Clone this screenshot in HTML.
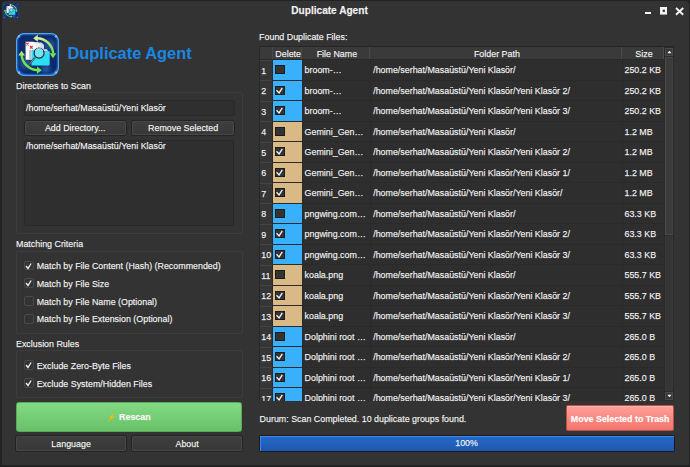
<!DOCTYPE html>
<html><head><meta charset="utf-8">
<style>
*{box-sizing:border-box;margin:0;padding:0}
html,body{width:690px;height:467px;overflow:hidden;background:#222}
body{font-family:"Liberation Sans",sans-serif;font-size:8.9px;color:#e8e8e8;position:relative}
.a{position:absolute}
.t{position:absolute;white-space:nowrap;line-height:1;color:#f2f2f2;-webkit-text-stroke:0.25px rgba(255,255,255,0.6)}
.group{border:1px solid #3c3c3c;border-radius:2px}
.input{background:#2f2f2f;border:1px solid #292929;border-radius:2px}
.btn{background:linear-gradient(#3e3e3e,#383838);border:1px solid #242424;border-radius:2.5px;box-shadow:inset 0 0 0 1px #474747}
.lcb{border:1px solid #4a4a4a;border-radius:2px;background:#333}
.ck{position:absolute}
.hd{position:absolute;background:#3a3a3a;border-right:1px solid #4a4a4a}
.vh{position:absolute;background:#363636;border-top:1px solid #444;}
.cell{position:absolute;background:#2e2e2e}
.b{background:#38b0fb}
.tn{background:#d9b985}
.tcb{position:absolute;width:9.4px;height:9.4px;background:#333;border:1px solid #1c1c1c}
.sb{position:absolute}
.dd{display:inline-block;width:0;position:relative;left:-3.95px;top:-0.6px}
</style></head><body>
<div class="a " style="left:1.5px;top:1px;width:687.5px;height:463.5px;background:#333;border-radius:4px 4px 0 0"></div>
<div class="a" style="left:3.2px;top:2.6px;width:15.7px;height:15.7px"><svg width="15.7" height="15.7" viewBox="0 0 43 43">
<defs>
<radialGradient id="bgs" cx="50%" cy="45%" r="65%"><stop offset="0" stop-color="#1a4a94"/><stop offset="0.55" stop-color="#0d2c6c"/><stop offset="0.88" stop-color="#0a2a6c"/><stop offset="1" stop-color="#1d62c4"/></radialGradient>
<radialGradient id="gls" cx="50%" cy="50%" r="50%"><stop offset="0" stop-color="#4a90e0" stop-opacity="0.45"/><stop offset="1" stop-color="#4a90e0" stop-opacity="0"/></radialGradient>
<linearGradient id="ars" x1="0" y1="0" x2="1" y2="1"><stop offset="0" stop-color="#e4ec9c"/><stop offset="1" stop-color="#74e04a"/></linearGradient>
</defs>
<rect x="0.6" y="0.6" width="41.8" height="41.8" rx="7.5" fill="url(#bgs)" stroke="#1a3060" stroke-width="2.2"/>
<rect x="1.8" y="1.8" width="39.4" height="39.4" rx="6.5" fill="none" stroke="#2a78d8" stroke-width="0.8" opacity="0.8"/>
<circle cx="9" cy="30" r="9" fill="url(#gls)"/><circle cx="34" cy="12" r="8" fill="url(#gls)"/><circle cx="30" cy="36" r="7" fill="url(#gls)"/>
<circle cx="3" cy="3.5" r="1.3" fill="#bfe2ff" opacity="0.55"/><circle cx="40" cy="3.5" r="1.3" fill="#bfe2ff" opacity="0.55"/>
<circle cx="3" cy="39.5" r="1.3" fill="#bfe2ff" opacity="0.55"/><circle cx="40" cy="39.5" r="1.3" fill="#bfe2ff" opacity="0.55"/>
<path d="M20 5.2 A16.5 16.5 0 0 1 37.2 20.5" stroke="url(#ars)" stroke-width="2.4" fill="none"/>
<path d="M17.2 5.3 L21.8 1.8 L21.8 8.8 Z" fill="#dcea98"/>
<path d="M33.6 20.2 L40.4 20.2 L37 25.3 Z" fill="#7ce04c"/>
<path d="M5.6 21.5 A16.5 16.5 0 0 0 21.5 37.2" stroke="#74e24a" stroke-width="2.4" fill="none"/>
<path d="M2.2 22.5 L5.6 17.8 L9 22.5 Z" fill="#a6e874"/>
<path d="M21 33.6 L25.8 37.2 L21 40.8 Z" fill="#74e24a"/>
<path d="M13 9.6 L25.5 9.6 L28 12 L28 24 L13 24 Z" fill="#d6dae2"/>
<path d="M11.2 9.2 L22 9.2 L24.5 11.6 L24.5 26 L11.2 26 Z" fill="#eceef2"/>
<path d="M9.6 8.8 L17.5 8.8 L19.5 10.8 L19.5 26.8 L9.6 26.8 Z" fill="#fbfbfb"/>
<rect x="13.2" y="17" width="2" height="9.6" fill="#b8bcc6"/>
<path d="M10.1 9.8 L12.7 12.4 M12.7 9.8 L10.1 12.4" stroke="#ee3030" stroke-width="1.2"/>
<path d="M14 13 L16.6 15.6 M16.6 13 L14 15.6" stroke="#ee3030" stroke-width="1.2"/>
<path d="M15.5 16.7 L26.5 16.7 L28 18.2 L33.7 18.2 L33.7 31 Q33.7 32.5 32.2 32.5 L15.5 32.5 Z" fill="#2fdcf2"/>
<path d="M27.5 16.3 L31 16.3 L32 18.2 L27.8 18.2 Z" fill="#cfeef6"/>
<path d="M15.5 19.8 L33.7 19.8" stroke="#7ae8f6" stroke-width="0.8"/>
<circle cx="23.1" cy="20.1" r="5.0" fill="#72e6f6" stroke="#1e2838" stroke-width="1.2"/>
<path d="M19.3 18 A4 4 0 0 1 26.9 18" stroke="#d8fbff" stroke-width="0.9" fill="none" opacity="0.8"/>
<path d="M19.4 23.9 L13.1 31.6" stroke="#1e2838" stroke-width="1.6"/>
<path d="M19.4 23.9 L13.1 31.6" stroke="#dfe4ec" stroke-width="0.6"/>
</svg></div>
<div class="t" style="left:291.3px;top:6.45px;font-size:10.1px;font-weight:bold;color:#f0f0f0">Duplicate Agent</div>
<div class="a " style="left:644.8px;top:11.7px;width:6.5px;height:2.6000000000000014px;background:#f2f2f2"></div>
<svg class="a" style="left:659.5px;top:7px" width="7.6" height="7.6" viewBox="0 0 7.6 7.6"><rect x="1.35" y="1.35" width="4.9" height="4.9" stroke="#f2f2f2" stroke-width="2.7" fill="none"/></svg><svg class="a" style="left:675px;top:6.5px" width="9" height="9" viewBox="0 0 9 9"><path d="M1 1 L8.2 7.8 M8.2 1 L1 7.8" stroke="#f2f2f2" stroke-width="1.9"/></svg>
<div class="a" style="left:16.4px;top:32.6px;width:43px;height:43px"><svg width="43" height="43" viewBox="0 0 43 43">
<defs>
<radialGradient id="bgl" cx="50%" cy="45%" r="65%"><stop offset="0" stop-color="#1a4a94"/><stop offset="0.55" stop-color="#0d2c6c"/><stop offset="0.88" stop-color="#0a2a6c"/><stop offset="1" stop-color="#1d62c4"/></radialGradient>
<radialGradient id="gll" cx="50%" cy="50%" r="50%"><stop offset="0" stop-color="#4a90e0" stop-opacity="0.45"/><stop offset="1" stop-color="#4a90e0" stop-opacity="0"/></radialGradient>
<linearGradient id="arl" x1="0" y1="0" x2="1" y2="1"><stop offset="0" stop-color="#e4ec9c"/><stop offset="1" stop-color="#74e04a"/></linearGradient>
</defs>
<rect x="0.6" y="0.6" width="41.8" height="41.8" rx="7.5" fill="url(#bgl)" stroke="#4aa8ff" stroke-width="1.2"/>
<rect x="1.8" y="1.8" width="39.4" height="39.4" rx="6.5" fill="none" stroke="#2a78d8" stroke-width="0.8" opacity="0.8"/>
<circle cx="9" cy="30" r="9" fill="url(#gll)"/><circle cx="34" cy="12" r="8" fill="url(#gll)"/><circle cx="30" cy="36" r="7" fill="url(#gll)"/>
<circle cx="3" cy="3.5" r="1.3" fill="#bfe2ff" opacity="0.55"/><circle cx="40" cy="3.5" r="1.3" fill="#bfe2ff" opacity="0.55"/>
<circle cx="3" cy="39.5" r="1.3" fill="#bfe2ff" opacity="0.55"/><circle cx="40" cy="39.5" r="1.3" fill="#bfe2ff" opacity="0.55"/>
<path d="M20 5.2 A16.5 16.5 0 0 1 37.2 20.5" stroke="url(#arl)" stroke-width="2.4" fill="none"/>
<path d="M17.2 5.3 L21.8 1.8 L21.8 8.8 Z" fill="#dcea98"/>
<path d="M33.6 20.2 L40.4 20.2 L37 25.3 Z" fill="#7ce04c"/>
<path d="M5.6 21.5 A16.5 16.5 0 0 0 21.5 37.2" stroke="#74e24a" stroke-width="2.4" fill="none"/>
<path d="M2.2 22.5 L5.6 17.8 L9 22.5 Z" fill="#a6e874"/>
<path d="M21 33.6 L25.8 37.2 L21 40.8 Z" fill="#74e24a"/>
<path d="M13 9.6 L25.5 9.6 L28 12 L28 24 L13 24 Z" fill="#d6dae2"/>
<path d="M11.2 9.2 L22 9.2 L24.5 11.6 L24.5 26 L11.2 26 Z" fill="#eceef2"/>
<path d="M9.6 8.8 L17.5 8.8 L19.5 10.8 L19.5 26.8 L9.6 26.8 Z" fill="#fbfbfb"/>
<rect x="13.2" y="17" width="2" height="9.6" fill="#b8bcc6"/>
<path d="M10.1 9.8 L12.7 12.4 M12.7 9.8 L10.1 12.4" stroke="#ee3030" stroke-width="1.2"/>
<path d="M14 13 L16.6 15.6 M16.6 13 L14 15.6" stroke="#ee3030" stroke-width="1.2"/>
<path d="M15.5 16.7 L26.5 16.7 L28 18.2 L33.7 18.2 L33.7 31 Q33.7 32.5 32.2 32.5 L15.5 32.5 Z" fill="#2fdcf2"/>
<path d="M27.5 16.3 L31 16.3 L32 18.2 L27.8 18.2 Z" fill="#cfeef6"/>
<path d="M15.5 19.8 L33.7 19.8" stroke="#7ae8f6" stroke-width="0.8"/>
<circle cx="23.1" cy="20.1" r="5.0" fill="#72e6f6" stroke="#1e2838" stroke-width="1.2"/>
<path d="M19.3 18 A4 4 0 0 1 26.9 18" stroke="#d8fbff" stroke-width="0.9" fill="none" opacity="0.8"/>
<path d="M19.4 23.9 L13.1 31.6" stroke="#1e2838" stroke-width="1.6"/>
<path d="M19.4 23.9 L13.1 31.6" stroke="#dfe4ec" stroke-width="0.6"/>
</svg></div>
<div class="t" style="left:67.5px;top:45.32px;font-size:16.4px;font-weight:bold;color:#1b86e4;-webkit-text-stroke:0">Duplicate Agent</div>
<div class="t" style="left:16px;top:82.07px;font-size:8.9px;">Directories to Scan</div>
<div class="a group" style="left:16px;top:92px;width:226.5px;height:141.5px;"></div>
<div class="a input" style="left:24.3px;top:100.3px;width:210.29999999999998px;height:15.5px;"></div>
<div class="t" style="left:26px;top:104.07px;font-size:8.9px;">/home/serhat/Masau<span class="dd">¨</span>stu<span class="dd">¨</span>/Yeni Klaso<span class="dd">¨</span>r</div>
<div class="a btn" style="left:23.5px;top:120.4px;width:103.3px;height:15.199999999999989px;"></div>
<div class="t" style="left:24.3px;width:101.7px;text-align:center;top:123.67px;font-size:8.9px;">Add Directory...</div>
<div class="a btn" style="left:131.3px;top:120.4px;width:103.6px;height:15.199999999999989px;"></div>
<div class="t" style="left:132px;width:102.30000000000001px;text-align:center;top:123.67px;font-size:8.9px;">Remove Selected</div>
<div class="a input" style="left:23.9px;top:139.5px;width:210.5px;height:86.80000000000001px;"></div>
<div class="t" style="left:26px;top:141.97px;font-size:8.9px;">/home/serhat/Masau<span class="dd">¨</span>stu<span class="dd">¨</span>/Yeni Klaso<span class="dd">¨</span>r</div>
<div class="t" style="left:16px;top:239.77px;font-size:8.9px;">Matching Criteria</div>
<div class="a group" style="left:16px;top:250.5px;width:226.5px;height:83.5px;"></div>
<div class="a lcb" style="left:23.9px;top:260.6px;width:9.800000000000004px;height:9.800000000000011px;"></div>
<svg class="a" style="left:23.9px;top:260.60px" width="10" height="10" viewBox="0 0 10 10"><path d="M2.1 5.0 L4.0 7.5 L7.1 2.5" stroke="#f4f4f4" stroke-width="1.3" fill="none"/></svg>
<div class="t" style="left:36.7px;top:261.87px;font-size:8.9px;">Match by File Content (Hash) (Recommended)</div>
<div class="a lcb" style="left:23.9px;top:278.3px;width:9.800000000000004px;height:9.800000000000011px;"></div>
<svg class="a" style="left:23.9px;top:278.30px" width="10" height="10" viewBox="0 0 10 10"><path d="M2.1 5.0 L4.0 7.5 L7.1 2.5" stroke="#f4f4f4" stroke-width="1.3" fill="none"/></svg>
<div class="t" style="left:36.7px;top:279.57px;font-size:8.9px;">Match by File Size</div>
<div class="a lcb" style="left:23.9px;top:296.3px;width:9.800000000000004px;height:9.800000000000011px;"></div>
<div class="t" style="left:36.7px;top:297.57px;font-size:8.9px;">Match by File Name (Optional)</div>
<div class="a lcb" style="left:23.9px;top:314.0px;width:9.800000000000004px;height:9.800000000000011px;"></div>
<div class="t" style="left:36.7px;top:315.27px;font-size:8.9px;">Match by File Extension (Optional)</div>
<div class="t" style="left:16px;top:340.17px;font-size:8.9px;">Exclusion Rules</div>
<div class="a group" style="left:16px;top:350.2px;width:226.5px;height:47.80000000000001px;"></div>
<div class="a lcb" style="left:23.9px;top:360.3px;width:9.800000000000004px;height:9.800000000000011px;"></div>
<svg class="a" style="left:23.9px;top:360.30px" width="10" height="10" viewBox="0 0 10 10"><path d="M2.1 5.0 L4.0 7.5 L7.1 2.5" stroke="#f4f4f4" stroke-width="1.3" fill="none"/></svg>
<div class="t" style="left:36.7px;top:361.57px;font-size:8.9px;">Exclude Zero-Byte Files</div>
<div class="a lcb" style="left:23.9px;top:378.3px;width:9.800000000000004px;height:9.800000000000011px;"></div>
<svg class="a" style="left:23.9px;top:378.30px" width="10" height="10" viewBox="0 0 10 10"><path d="M2.1 5.0 L4.0 7.5 L7.1 2.5" stroke="#f4f4f4" stroke-width="1.3" fill="none"/></svg>
<div class="t" style="left:36.7px;top:379.57px;font-size:8.9px;">Exclude System/Hidden Files</div>
<div class="a btn" style="left:15.9px;top:402px;width:226.5px;height:29.80000000000001px;background:linear-gradient(#82da82,#68c068);border-color:#5aa85a;box-shadow:none"></div>
<svg class="a" style="left:108.2px;top:413px" width="7" height="8.5" viewBox="0 0 7 8.5"><path d="M6.4 0 L0.9 4.9 L3.4 4.6 L0.6 8.4 L6.3 3.5 L3.9 3.8 Z" fill="#f5c01a" stroke="#f5b81a" stroke-width="0.5" stroke-linejoin="round"/></svg>
<div class="t" style="left:119.1px;top:412.87px;font-size:8.9px;font-weight:bold;color:#fafafa">Rescan</div>
<div class="a btn" style="left:15px;top:435.2px;width:112.2px;height:16.400000000000034px;"></div>
<div class="t" style="left:16px;width:110.2px;text-align:center;top:439.97px;font-size:8.9px;">Language</div>
<div class="a btn" style="left:130.8px;top:435.2px;width:112.39999999999998px;height:16.400000000000034px;"></div>
<div class="t" style="left:131.9px;width:110.4px;text-align:center;top:439.97px;font-size:8.9px;">About</div>
<div class="t" style="left:259.1px;top:32.97px;font-size:8.9px;">Found Duplicate Files:</div>
<div class="a " style="left:259px;top:46.2px;width:415px;height:354.8px;background:#2a2a2a;border:1px solid #262626"></div>
<div class="a hd" style="left:260px;top:47.1px;width:12.5px;height:11.899999999999999px;"></div>
<div class="a hd" style="left:272.5px;top:47.1px;width:29.5px;height:11.899999999999999px;"></div>
<div class="t" style="left:273.4px;width:29.5px;text-align:center;top:50.07px;font-size:8.9px;">Delete</div>
<div class="a hd" style="left:302px;top:47.1px;width:68px;height:11.899999999999999px;"></div>
<div class="t" style="left:302.9px;width:68.0px;text-align:center;top:50.07px;font-size:8.9px;">File Name</div>
<div class="a hd" style="left:370px;top:47.1px;width:252px;height:11.899999999999999px;"></div>
<div class="t" style="left:370.9px;width:252.0px;text-align:center;top:50.07px;font-size:8.9px;">Folder Path</div>
<div class="a hd" style="left:622px;top:47.1px;width:42.10000000000002px;height:11.899999999999999px;"></div>
<div class="t" style="left:622.9px;width:42.10000000000002px;text-align:center;top:50.07px;font-size:8.9px;">Size</div>
<div class="a" style="left:260px;top:59px;width:404.5px;height:342px;overflow:hidden">
<div class="vh" style="left:0;top:0.80px;width:12.300000000000011px;height:20.5px"></div><div class="cell b" style="left:13.00px;top:1.40px;width:29.20px;height:19.5px"></div><div class="cell" style="left:42.80px;top:1.40px;width:66.80px;height:19.6px"></div><div class="cell" style="left:110.60px;top:1.40px;width:251.00px;height:19.6px"></div><div class="cell" style="left:362.60px;top:1.40px;width:41.90px;height:19.6px"></div><div class="t" style="left:1.3000000000000114px;top:7.57px;font-size:8.9px;">1</div>
<div class="tcb" style="left:15.40px;top:6.00px"></div><div class="t" style="left:44.60000000000002px;top:7.07px;font-size:8.9px;">broom-…</div>
<div class="t" style="left:113.19999999999999px;top:7.07px;font-size:8.9px;">/home/serhat/Masau<span class="dd">¨</span>stu<span class="dd">¨</span>/Yeni Klaso<span class="dd">¨</span>r/</div>
<div class="t" style="left:364.5px;top:7.07px;font-size:8.9px;">250.2 KB</div>

<div class="vh" style="left:0;top:21.30px;width:12.300000000000011px;height:20.5px"></div><div class="cell b" style="left:13.00px;top:21.90px;width:29.20px;height:19.5px"></div><div class="cell" style="left:42.80px;top:21.90px;width:66.80px;height:19.6px"></div><div class="cell" style="left:110.60px;top:21.90px;width:251.00px;height:19.6px"></div><div class="cell" style="left:362.60px;top:21.90px;width:41.90px;height:19.6px"></div><div class="t" style="left:1.3000000000000114px;top:28.07px;font-size:8.9px;">2</div>
<div class="tcb" style="left:15.40px;top:26.50px"></div><svg class="ck" style="left:15.40px;top:26.50px" width="10" height="10" viewBox="0 0 10 10"><path d="M1.5 4.3 L4.1 6.9 L7.3 1.8" stroke="#f4f4f4" stroke-width="1.3" fill="none"/></svg><div class="t" style="left:44.60000000000002px;top:27.57px;font-size:8.9px;">broom-…</div>
<div class="t" style="left:113.19999999999999px;top:27.57px;font-size:8.9px;">/home/serhat/Masau<span class="dd">¨</span>stu<span class="dd">¨</span>/Yeni Klaso<span class="dd">¨</span>r/Yeni Klaso<span class="dd">¨</span>r 2/</div>
<div class="t" style="left:364.5px;top:27.57px;font-size:8.9px;">250.2 KB</div>

<div class="vh" style="left:0;top:41.80px;width:12.300000000000011px;height:20.5px"></div><div class="cell b" style="left:13.00px;top:42.40px;width:29.20px;height:19.5px"></div><div class="cell" style="left:42.80px;top:42.40px;width:66.80px;height:19.6px"></div><div class="cell" style="left:110.60px;top:42.40px;width:251.00px;height:19.6px"></div><div class="cell" style="left:362.60px;top:42.40px;width:41.90px;height:19.6px"></div><div class="t" style="left:1.3000000000000114px;top:48.57px;font-size:8.9px;">3</div>
<div class="tcb" style="left:15.40px;top:47.00px"></div><svg class="ck" style="left:15.40px;top:47.00px" width="10" height="10" viewBox="0 0 10 10"><path d="M1.5 4.3 L4.1 6.9 L7.3 1.8" stroke="#f4f4f4" stroke-width="1.3" fill="none"/></svg><div class="t" style="left:44.60000000000002px;top:48.07px;font-size:8.9px;">broom-…</div>
<div class="t" style="left:113.19999999999999px;top:48.07px;font-size:8.9px;">/home/serhat/Masau<span class="dd">¨</span>stu<span class="dd">¨</span>/Yeni Klaso<span class="dd">¨</span>r/Yeni Klaso<span class="dd">¨</span>r 3/</div>
<div class="t" style="left:364.5px;top:48.07px;font-size:8.9px;">250.2 KB</div>

<div class="vh" style="left:0;top:62.30px;width:12.300000000000011px;height:20.5px"></div><div class="cell tn" style="left:13.00px;top:62.90px;width:29.20px;height:19.5px"></div><div class="cell" style="left:42.80px;top:62.90px;width:66.80px;height:19.6px"></div><div class="cell" style="left:110.60px;top:62.90px;width:251.00px;height:19.6px"></div><div class="cell" style="left:362.60px;top:62.90px;width:41.90px;height:19.6px"></div><div class="t" style="left:1.3000000000000114px;top:69.07px;font-size:8.9px;">4</div>
<div class="tcb" style="left:15.40px;top:67.50px"></div><div class="t" style="left:44.60000000000002px;top:68.57px;font-size:8.9px;">Gemini_Gen…</div>
<div class="t" style="left:113.19999999999999px;top:68.57px;font-size:8.9px;">/home/serhat/Masau<span class="dd">¨</span>stu<span class="dd">¨</span>/Yeni Klaso<span class="dd">¨</span>r/</div>
<div class="t" style="left:364.5px;top:68.57px;font-size:8.9px;">1.2 MB</div>

<div class="vh" style="left:0;top:82.80px;width:12.300000000000011px;height:20.5px"></div><div class="cell tn" style="left:13.00px;top:83.40px;width:29.20px;height:19.5px"></div><div class="cell" style="left:42.80px;top:83.40px;width:66.80px;height:19.6px"></div><div class="cell" style="left:110.60px;top:83.40px;width:251.00px;height:19.6px"></div><div class="cell" style="left:362.60px;top:83.40px;width:41.90px;height:19.6px"></div><div class="t" style="left:1.3000000000000114px;top:89.57px;font-size:8.9px;">5</div>
<div class="tcb" style="left:15.40px;top:88.00px"></div><svg class="ck" style="left:15.40px;top:88.00px" width="10" height="10" viewBox="0 0 10 10"><path d="M1.5 4.3 L4.1 6.9 L7.3 1.8" stroke="#f4f4f4" stroke-width="1.3" fill="none"/></svg><div class="t" style="left:44.60000000000002px;top:89.07px;font-size:8.9px;">Gemini_Gen…</div>
<div class="t" style="left:113.19999999999999px;top:89.07px;font-size:8.9px;">/home/serhat/Masau<span class="dd">¨</span>stu<span class="dd">¨</span>/Yeni Klaso<span class="dd">¨</span>r/Yeni Klaso<span class="dd">¨</span>r 2/</div>
<div class="t" style="left:364.5px;top:89.07px;font-size:8.9px;">1.2 MB</div>

<div class="vh" style="left:0;top:103.30px;width:12.300000000000011px;height:20.5px"></div><div class="cell tn" style="left:13.00px;top:103.90px;width:29.20px;height:19.5px"></div><div class="cell" style="left:42.80px;top:103.90px;width:66.80px;height:19.6px"></div><div class="cell" style="left:110.60px;top:103.90px;width:251.00px;height:19.6px"></div><div class="cell" style="left:362.60px;top:103.90px;width:41.90px;height:19.6px"></div><div class="t" style="left:1.3000000000000114px;top:110.07px;font-size:8.9px;">6</div>
<div class="tcb" style="left:15.40px;top:108.50px"></div><svg class="ck" style="left:15.40px;top:108.50px" width="10" height="10" viewBox="0 0 10 10"><path d="M1.5 4.3 L4.1 6.9 L7.3 1.8" stroke="#f4f4f4" stroke-width="1.3" fill="none"/></svg><div class="t" style="left:44.60000000000002px;top:109.57px;font-size:8.9px;">Gemini_Gen…</div>
<div class="t" style="left:113.19999999999999px;top:109.57px;font-size:8.9px;">/home/serhat/Masau<span class="dd">¨</span>stu<span class="dd">¨</span>/Yeni Klaso<span class="dd">¨</span>r/Yeni Klaso<span class="dd">¨</span>r 1/</div>
<div class="t" style="left:364.5px;top:109.57px;font-size:8.9px;">1.2 MB</div>

<div class="vh" style="left:0;top:123.80px;width:12.300000000000011px;height:20.5px"></div><div class="cell tn" style="left:13.00px;top:124.40px;width:29.20px;height:19.5px"></div><div class="cell" style="left:42.80px;top:124.40px;width:66.80px;height:19.6px"></div><div class="cell" style="left:110.60px;top:124.40px;width:251.00px;height:19.6px"></div><div class="cell" style="left:362.60px;top:124.40px;width:41.90px;height:19.6px"></div><div class="t" style="left:1.3000000000000114px;top:130.57px;font-size:8.9px;">7</div>
<div class="tcb" style="left:15.40px;top:129.00px"></div><svg class="ck" style="left:15.40px;top:129.00px" width="10" height="10" viewBox="0 0 10 10"><path d="M1.5 4.3 L4.1 6.9 L7.3 1.8" stroke="#f4f4f4" stroke-width="1.3" fill="none"/></svg><div class="t" style="left:44.60000000000002px;top:130.07px;font-size:8.9px;">Gemini_Gen…</div>
<div class="t" style="left:113.19999999999999px;top:130.07px;font-size:8.9px;">/home/serhat/Masau<span class="dd">¨</span>stu<span class="dd">¨</span>/Yeni Klaso<span class="dd">¨</span>r/Yeni Klaso<span class="dd">¨</span>r/</div>
<div class="t" style="left:364.5px;top:130.07px;font-size:8.9px;">1.2 MB</div>

<div class="vh" style="left:0;top:144.30px;width:12.300000000000011px;height:20.5px"></div><div class="cell b" style="left:13.00px;top:144.90px;width:29.20px;height:19.5px"></div><div class="cell" style="left:42.80px;top:144.90px;width:66.80px;height:19.6px"></div><div class="cell" style="left:110.60px;top:144.90px;width:251.00px;height:19.6px"></div><div class="cell" style="left:362.60px;top:144.90px;width:41.90px;height:19.6px"></div><div class="t" style="left:1.3000000000000114px;top:151.07px;font-size:8.9px;">8</div>
<div class="tcb" style="left:15.40px;top:149.50px"></div><div class="t" style="left:44.60000000000002px;top:150.57px;font-size:8.9px;">pngwing.com…</div>
<div class="t" style="left:113.19999999999999px;top:150.57px;font-size:8.9px;">/home/serhat/Masau<span class="dd">¨</span>stu<span class="dd">¨</span>/Yeni Klaso<span class="dd">¨</span>r/</div>
<div class="t" style="left:364.5px;top:150.57px;font-size:8.9px;">63.3 KB</div>

<div class="vh" style="left:0;top:164.80px;width:12.300000000000011px;height:20.5px"></div><div class="cell b" style="left:13.00px;top:165.40px;width:29.20px;height:19.5px"></div><div class="cell" style="left:42.80px;top:165.40px;width:66.80px;height:19.6px"></div><div class="cell" style="left:110.60px;top:165.40px;width:251.00px;height:19.6px"></div><div class="cell" style="left:362.60px;top:165.40px;width:41.90px;height:19.6px"></div><div class="t" style="left:1.3000000000000114px;top:171.57px;font-size:8.9px;">9</div>
<div class="tcb" style="left:15.40px;top:170.00px"></div><svg class="ck" style="left:15.40px;top:170.00px" width="10" height="10" viewBox="0 0 10 10"><path d="M1.5 4.3 L4.1 6.9 L7.3 1.8" stroke="#f4f4f4" stroke-width="1.3" fill="none"/></svg><div class="t" style="left:44.60000000000002px;top:171.07px;font-size:8.9px;">pngwing.com…</div>
<div class="t" style="left:113.19999999999999px;top:171.07px;font-size:8.9px;">/home/serhat/Masau<span class="dd">¨</span>stu<span class="dd">¨</span>/Yeni Klaso<span class="dd">¨</span>r/Yeni Klaso<span class="dd">¨</span>r 2/</div>
<div class="t" style="left:364.5px;top:171.07px;font-size:8.9px;">63.3 KB</div>

<div class="vh" style="left:0;top:185.30px;width:12.300000000000011px;height:20.5px"></div><div class="cell b" style="left:13.00px;top:185.90px;width:29.20px;height:19.5px"></div><div class="cell" style="left:42.80px;top:185.90px;width:66.80px;height:19.6px"></div><div class="cell" style="left:110.60px;top:185.90px;width:251.00px;height:19.6px"></div><div class="cell" style="left:362.60px;top:185.90px;width:41.90px;height:19.6px"></div><div class="t" style="left:1.3000000000000114px;top:192.07px;font-size:8.9px;">10</div>
<div class="tcb" style="left:15.40px;top:190.50px"></div><svg class="ck" style="left:15.40px;top:190.50px" width="10" height="10" viewBox="0 0 10 10"><path d="M1.5 4.3 L4.1 6.9 L7.3 1.8" stroke="#f4f4f4" stroke-width="1.3" fill="none"/></svg><div class="t" style="left:44.60000000000002px;top:191.57px;font-size:8.9px;">pngwing.com…</div>
<div class="t" style="left:113.19999999999999px;top:191.57px;font-size:8.9px;">/home/serhat/Masau<span class="dd">¨</span>stu<span class="dd">¨</span>/Yeni Klaso<span class="dd">¨</span>r/Yeni Klaso<span class="dd">¨</span>r 3/</div>
<div class="t" style="left:364.5px;top:191.57px;font-size:8.9px;">63.3 KB</div>

<div class="vh" style="left:0;top:205.80px;width:12.300000000000011px;height:20.5px"></div><div class="cell tn" style="left:13.00px;top:206.40px;width:29.20px;height:19.5px"></div><div class="cell" style="left:42.80px;top:206.40px;width:66.80px;height:19.6px"></div><div class="cell" style="left:110.60px;top:206.40px;width:251.00px;height:19.6px"></div><div class="cell" style="left:362.60px;top:206.40px;width:41.90px;height:19.6px"></div><div class="t" style="left:1.3000000000000114px;top:212.57px;font-size:8.9px;">11</div>
<div class="tcb" style="left:15.40px;top:211.00px"></div><div class="t" style="left:44.60000000000002px;top:212.07px;font-size:8.9px;">koala.png</div>
<div class="t" style="left:113.19999999999999px;top:212.07px;font-size:8.9px;">/home/serhat/Masau<span class="dd">¨</span>stu<span class="dd">¨</span>/Yeni Klaso<span class="dd">¨</span>r/</div>
<div class="t" style="left:364.5px;top:212.07px;font-size:8.9px;">555.7 KB</div>

<div class="vh" style="left:0;top:226.30px;width:12.300000000000011px;height:20.5px"></div><div class="cell tn" style="left:13.00px;top:226.90px;width:29.20px;height:19.5px"></div><div class="cell" style="left:42.80px;top:226.90px;width:66.80px;height:19.6px"></div><div class="cell" style="left:110.60px;top:226.90px;width:251.00px;height:19.6px"></div><div class="cell" style="left:362.60px;top:226.90px;width:41.90px;height:19.6px"></div><div class="t" style="left:1.3000000000000114px;top:233.07px;font-size:8.9px;">12</div>
<div class="tcb" style="left:15.40px;top:231.50px"></div><svg class="ck" style="left:15.40px;top:231.50px" width="10" height="10" viewBox="0 0 10 10"><path d="M1.5 4.3 L4.1 6.9 L7.3 1.8" stroke="#f4f4f4" stroke-width="1.3" fill="none"/></svg><div class="t" style="left:44.60000000000002px;top:232.57px;font-size:8.9px;">koala.png</div>
<div class="t" style="left:113.19999999999999px;top:232.57px;font-size:8.9px;">/home/serhat/Masau<span class="dd">¨</span>stu<span class="dd">¨</span>/Yeni Klaso<span class="dd">¨</span>r/Yeni Klaso<span class="dd">¨</span>r 2/</div>
<div class="t" style="left:364.5px;top:232.57px;font-size:8.9px;">555.7 KB</div>

<div class="vh" style="left:0;top:246.80px;width:12.300000000000011px;height:20.5px"></div><div class="cell tn" style="left:13.00px;top:247.40px;width:29.20px;height:19.5px"></div><div class="cell" style="left:42.80px;top:247.40px;width:66.80px;height:19.6px"></div><div class="cell" style="left:110.60px;top:247.40px;width:251.00px;height:19.6px"></div><div class="cell" style="left:362.60px;top:247.40px;width:41.90px;height:19.6px"></div><div class="t" style="left:1.3000000000000114px;top:253.57px;font-size:8.9px;">13</div>
<div class="tcb" style="left:15.40px;top:252.00px"></div><svg class="ck" style="left:15.40px;top:252.00px" width="10" height="10" viewBox="0 0 10 10"><path d="M1.5 4.3 L4.1 6.9 L7.3 1.8" stroke="#f4f4f4" stroke-width="1.3" fill="none"/></svg><div class="t" style="left:44.60000000000002px;top:253.07px;font-size:8.9px;">koala.png</div>
<div class="t" style="left:113.19999999999999px;top:253.07px;font-size:8.9px;">/home/serhat/Masau<span class="dd">¨</span>stu<span class="dd">¨</span>/Yeni Klaso<span class="dd">¨</span>r/Yeni Klaso<span class="dd">¨</span>r 3/</div>
<div class="t" style="left:364.5px;top:253.07px;font-size:8.9px;">555.7 KB</div>

<div class="vh" style="left:0;top:267.30px;width:12.300000000000011px;height:20.5px"></div><div class="cell b" style="left:13.00px;top:267.90px;width:29.20px;height:19.5px"></div><div class="cell" style="left:42.80px;top:267.90px;width:66.80px;height:19.6px"></div><div class="cell" style="left:110.60px;top:267.90px;width:251.00px;height:19.6px"></div><div class="cell" style="left:362.60px;top:267.90px;width:41.90px;height:19.6px"></div><div class="t" style="left:1.3000000000000114px;top:274.07px;font-size:8.9px;">14</div>
<div class="tcb" style="left:15.40px;top:272.50px"></div><div class="t" style="left:44.60000000000002px;top:273.57px;font-size:8.9px;">Dolphini root …</div>
<div class="t" style="left:113.19999999999999px;top:273.57px;font-size:8.9px;">/home/serhat/Masau<span class="dd">¨</span>stu<span class="dd">¨</span>/Yeni Klaso<span class="dd">¨</span>r/</div>
<div class="t" style="left:364.5px;top:273.57px;font-size:8.9px;">265.0 B</div>

<div class="vh" style="left:0;top:287.80px;width:12.300000000000011px;height:20.5px"></div><div class="cell b" style="left:13.00px;top:288.40px;width:29.20px;height:19.5px"></div><div class="cell" style="left:42.80px;top:288.40px;width:66.80px;height:19.6px"></div><div class="cell" style="left:110.60px;top:288.40px;width:251.00px;height:19.6px"></div><div class="cell" style="left:362.60px;top:288.40px;width:41.90px;height:19.6px"></div><div class="t" style="left:1.3000000000000114px;top:294.57px;font-size:8.9px;">15</div>
<div class="tcb" style="left:15.40px;top:293.00px"></div><svg class="ck" style="left:15.40px;top:293.00px" width="10" height="10" viewBox="0 0 10 10"><path d="M1.5 4.3 L4.1 6.9 L7.3 1.8" stroke="#f4f4f4" stroke-width="1.3" fill="none"/></svg><div class="t" style="left:44.60000000000002px;top:294.07px;font-size:8.9px;">Dolphini root …</div>
<div class="t" style="left:113.19999999999999px;top:294.07px;font-size:8.9px;">/home/serhat/Masau<span class="dd">¨</span>stu<span class="dd">¨</span>/Yeni Klaso<span class="dd">¨</span>r/Yeni Klaso<span class="dd">¨</span>r 2/</div>
<div class="t" style="left:364.5px;top:294.07px;font-size:8.9px;">265.0 B</div>

<div class="vh" style="left:0;top:308.30px;width:12.300000000000011px;height:20.5px"></div><div class="cell b" style="left:13.00px;top:308.90px;width:29.20px;height:19.5px"></div><div class="cell" style="left:42.80px;top:308.90px;width:66.80px;height:19.6px"></div><div class="cell" style="left:110.60px;top:308.90px;width:251.00px;height:19.6px"></div><div class="cell" style="left:362.60px;top:308.90px;width:41.90px;height:19.6px"></div><div class="t" style="left:1.3000000000000114px;top:315.07px;font-size:8.9px;">16</div>
<div class="tcb" style="left:15.40px;top:313.50px"></div><svg class="ck" style="left:15.40px;top:313.50px" width="10" height="10" viewBox="0 0 10 10"><path d="M1.5 4.3 L4.1 6.9 L7.3 1.8" stroke="#f4f4f4" stroke-width="1.3" fill="none"/></svg><div class="t" style="left:44.60000000000002px;top:314.57px;font-size:8.9px;">Dolphini root …</div>
<div class="t" style="left:113.19999999999999px;top:314.57px;font-size:8.9px;">/home/serhat/Masau<span class="dd">¨</span>stu<span class="dd">¨</span>/Yeni Klaso<span class="dd">¨</span>r/Yeni Klaso<span class="dd">¨</span>r 1/</div>
<div class="t" style="left:364.5px;top:314.57px;font-size:8.9px;">265.0 B</div>

<div class="vh" style="left:0;top:328.80px;width:12.300000000000011px;height:20.5px"></div><div class="cell b" style="left:13.00px;top:329.40px;width:29.20px;height:19.5px"></div><div class="cell" style="left:42.80px;top:329.40px;width:66.80px;height:19.6px"></div><div class="cell" style="left:110.60px;top:329.40px;width:251.00px;height:19.6px"></div><div class="cell" style="left:362.60px;top:329.40px;width:41.90px;height:19.6px"></div><div class="t" style="left:1.3000000000000114px;top:335.57px;font-size:8.9px;">17</div>
<div class="tcb" style="left:15.40px;top:334.00px"></div><svg class="ck" style="left:15.40px;top:334.00px" width="10" height="10" viewBox="0 0 10 10"><path d="M1.5 4.3 L4.1 6.9 L7.3 1.8" stroke="#f4f4f4" stroke-width="1.3" fill="none"/></svg><div class="t" style="left:44.60000000000002px;top:335.07px;font-size:8.9px;">Dolphini root …</div>
<div class="t" style="left:113.19999999999999px;top:335.07px;font-size:8.9px;">/home/serhat/Masau<span class="dd">¨</span>stu<span class="dd">¨</span>/Yeni Klaso<span class="dd">¨</span>r/Yeni Klaso<span class="dd">¨</span>r 3/</div>
<div class="t" style="left:364.5px;top:335.07px;font-size:8.9px;">265.0 B</div>

</div>
<div class="a " style="left:663.6px;top:47px;width:10.799999999999955px;height:353.8px;background:#2b2b2b"></div>
<div class="a " style="left:664.6px;top:48px;width:8.899999999999977px;height:8px;background:#383838;border:1px solid #4a4a4a"></div>
<svg class="a" style="left:664.6px;top:48px" width="8.9" height="8" viewBox="0 0 8.9 8"><path d="M2.2 5.3 L4.45 2.7 L6.7 5.3 Z" fill="#eee"/></svg>
<div class="a " style="left:664.6px;top:57px;width:8.899999999999977px;height:178px;background:#3b3b3b;border:1px solid #4a4a4a;border-right-color:#404040"></div>
<div class="a " style="left:664.6px;top:236px;width:8.899999999999977px;height:155.39999999999998px;background:#353535;border:1px solid #393939"></div>
<div class="a " style="left:664.6px;top:392.2px;width:8.899999999999977px;height:8.0px;background:#383838;border:1px solid #4a4a4a"></div>
<svg class="a" style="left:664.6px;top:392.2px" width="8.9" height="8" viewBox="0 0 8.9 8"><path d="M2.2 2.7 L4.45 5.3 L6.7 2.7 Z" fill="#eee"/></svg>
<div class="t" style="left:259.6px;top:415.27px;font-size:8.9px;">Durum: Scan Completed. 10 duplicate groups found.</div>
<div class="a btn" style="left:565.8px;top:405.2px;width:108.60000000000002px;height:26.19999999999999px;background:linear-gradient(#ffa19a,#f3746b);border-color:#b4524c;border-radius:1.5px;box-shadow:inset 0 1px 0 #ffb0aa"></div>
<div class="t" style="left:566px;width:108.29999999999995px;text-align:center;top:414.77px;font-size:8.9px;font-weight:bold;color:#fff">Move Selected to Trash</div>
<div class="a " style="left:258.6px;top:435.3px;width:416.0px;height:16.30000000000001px;background:linear-gradient(#2669c8,#1d58b0);border:1px solid #1c1a18;border-radius:1.5px;box-shadow:inset 1px 1px 0 #3a88ea"></div>
<div class="t" style="left:259.4px;width:414.4px;text-align:center;top:439.47px;font-size:8.9px;color:#f4f4f4">100%</div>
</body></html>
